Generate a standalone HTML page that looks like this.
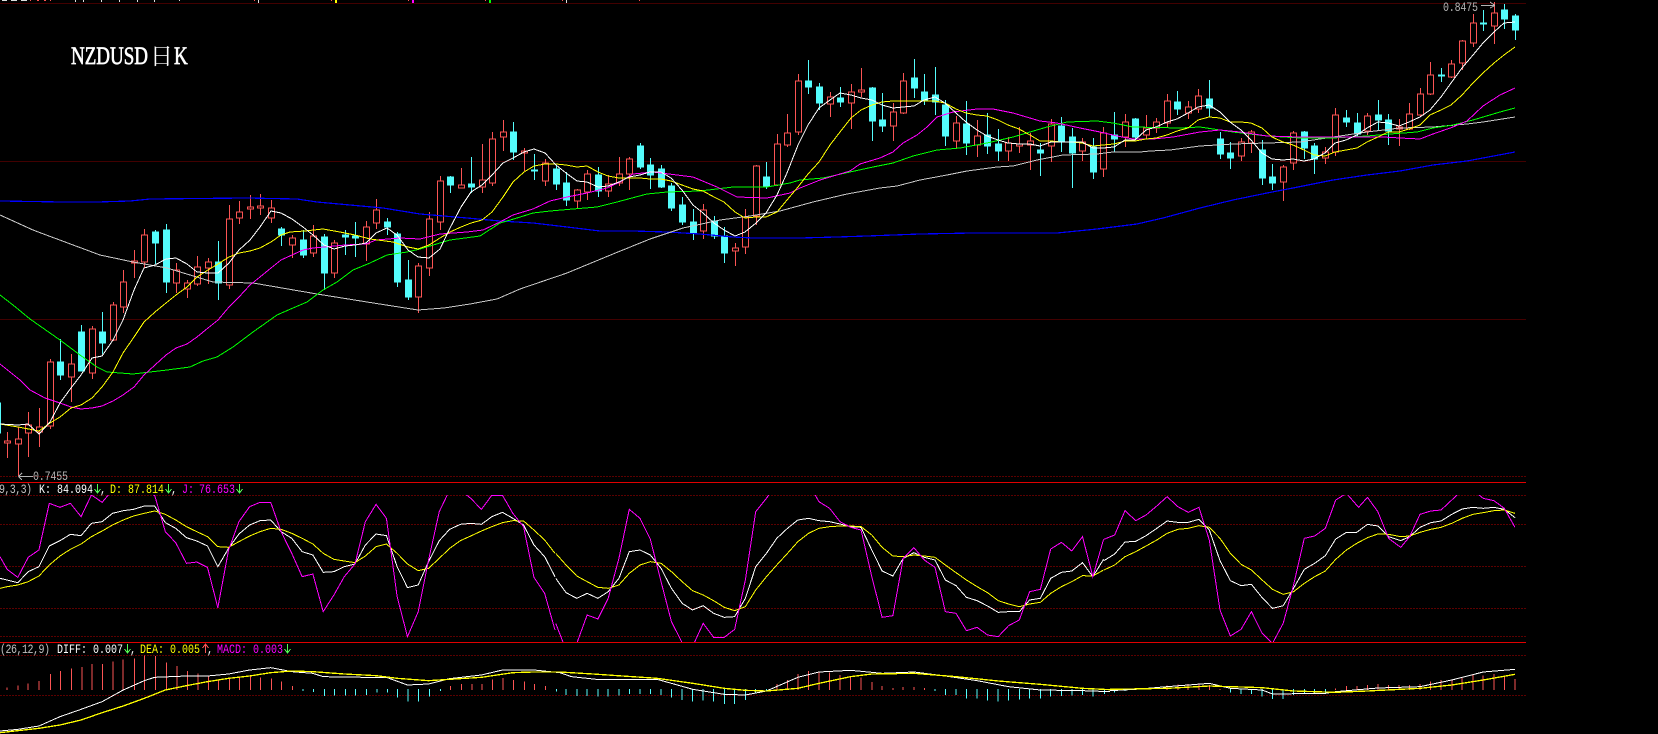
<!DOCTYPE html>
<html><head><meta charset="utf-8"><title>NZDUSD</title>
<style>
html,body{margin:0;padding:0;background:#000;width:1658px;height:734px;overflow:hidden}
svg{display:block;position:absolute;left:0;top:0}
text{font-family:"Liberation Mono","Noto Sans CJK SC",monospace;font-size:10px}
polyline,path.l{fill:none;vector-effect:non-scaling-stroke}
</style></head><body>
<svg width="1658" height="734" viewBox="0 0 1658 734" shape-rendering="crispEdges">
<defs><clipPath id="kc"><rect x="0" y="495" width="1526" height="147"/></clipPath></defs>
<rect width="1658" height="734" fill="#000"/>

<g stroke="#420000" stroke-width="1" fill="none">
<path d="M0 3.5H1526M0 161.5H1526M0 319.5H1526"/>
<path d="M0 476.5H1526M0 495.5H1526M0 524.5H1526M0 566.5H1526M0 608.5H1526M0 636.5H1526M0 655.5H1526M0 695.5H1526" stroke="#5c0000" stroke-dasharray="2 1"/>
</g>
<path d="M0 482.5H1526M0 642.5H1526" stroke="#e00000" stroke-width="1" fill="none"/>

<g fill="#ddd"><rect x="2" y="0" width="5" height="1"/><rect x="11" y="0" width="6" height="1"/><rect x="21" y="0" width="6" height="1"/><rect x="75" y="0" width="1" height="2"/><rect x="83" y="0" width="1" height="2"/><rect x="101" y="0" width="1" height="2"/><rect x="119" y="0" width="1" height="2"/><rect x="137" y="0" width="1" height="2"/><rect x="154" y="0" width="1" height="2"/><rect x="179" y="0" width="1" height="1"/><rect x="258" y="0" width="1" height="3"/><rect x="566" y="0" width="1" height="3"/></g>
<g fill="#fc5454"><rect x="30" y="0" width="1" height="1"/><rect x="37" y="0" width="2" height="1"/><rect x="44" y="0" width="2" height="1"/><rect x="50" y="0" width="1" height="1"/><rect x="254" y="0" width="1" height="1"/><rect x="331" y="0" width="1" height="1"/><rect x="408" y="0" width="1" height="1"/><rect x="485" y="0" width="1" height="1"/><rect x="562" y="0" width="1" height="1"/><rect x="639" y="0" width="1" height="1"/></g>
<rect x="335" y="0" width="2" height="3" fill="#ff0"/><rect x="412" y="0" width="2" height="3" fill="#f0f"/><rect x="489" y="0" width="2" height="3" fill="#0f0"/>

<g fill="#fff" stroke="#fff" stroke-width=".5" shape-rendering="auto">
<text transform="translate(71 64) scale(1 1.35)" style="font-family:'Liberation Serif',serif;font-size:19px" textLength="77" lengthAdjust="spacingAndGlyphs">NZDUSD</text>
<text x="150" y="64" style="font-family:'Liberation Serif','Noto Serif CJK SC',serif;font-size:23px" stroke-width="0">日</text>
<text transform="translate(174 64) scale(1 1.35)" style="font-family:'Liberation Serif',serif;font-size:19px">K</text>
</g>

<path fill="none" stroke="#fc5454" stroke-width="1" d="
M7.5 432V441M7.5 443V458M4.5 441h6v2h-6z
M18.5 427V439M18.5 444V476M15.5 439h6v5h-6z
M28.5 412V425M28.5 433V457M25.5 425h6v8h-6z
M39.5 408V427M39.5 432V447M36.5 427h6v5h-6z
M50.5 359V362M50.5 426V429M47.5 362h6v64h-6z
M71.5 354V364M71.5 377V402M68.5 364h6v13h-6z
M92.5 326V329M92.5 373V379M89.5 329h6v44h-6z
M113.5 302V305M113.5 340V341M110.5 305h6v35h-6z
M123.5 270V282M123.5 307V313M120.5 282h6v25h-6z
M134.5 250V261M134.5 263V278M131.5 261h6v2h-6z
M144.5 229V235M144.5 262V268M141.5 235h6v27h-6z
M176.5 263V270M176.5 283V293M173.5 270h6v13h-6z
M187.5 280V283M187.5 289V298M184.5 283h6v6h-6z
M197.5 256V267M197.5 284V286M194.5 267h6v17h-6z
M208.5 258V262M208.5 268V284M205.5 262h6v6h-6z
M229.5 205V219M229.5 285V289M226.5 219h6v66h-6z
M239.5 201V212M239.5 218V224M236.5 212h6v6h-6z
M250.5 195V207M250.5 209V219M247.5 207h6v2h-6z
M260.5 194V206M260.5 208V215M257.5 206h6v2h-6z
M271.5 200V208M271.5 218V223M268.5 208h6v10h-6z
M292.5 235V238M292.5 245V258M289.5 238h6v7h-6z
M313.5 225V236M313.5 253V257M310.5 236h6v17h-6z
M334.5 240V243M334.5 273V278M331.5 243h6v30h-6z
M366.5 221V227M366.5 244V261M363.5 227h6v17h-6z
M376.5 199V210M376.5 223V229M373.5 210h6v13h-6z
M418.5 263V266M418.5 297V313M415.5 266h6v31h-6z
M429.5 212V219M429.5 268V276M426.5 219h6v49h-6z
M440.5 176V181M440.5 222V230M437.5 181h6v41h-6z
M461.5 168V185M458.5 185h6v3h-6z
M482.5 144V180M482.5 187V193M479.5 180h6v7h-6z
M492.5 132V139M492.5 183V186M489.5 139h6v44h-6z
M503.5 120V132M503.5 137V151M500.5 132h6v5h-6z
M524.5 148V151M524.5 153V171M521.5 151h6v2h-6z
M545.5 159V163M545.5 181V186M542.5 163h6v18h-6z
M577.5 189V190M577.5 201V209M574.5 190h6v11h-6z
M587.5 170V174M587.5 192V200M584.5 174h6v18h-6z
M608.5 175V184M608.5 191V197M605.5 184h6v7h-6z
M619.5 157V174M619.5 183V186M616.5 174h6v9h-6z
M629.5 157V159M629.5 174V190M626.5 159h6v15h-6z
M703.5 204V210M703.5 231V239M700.5 210h6v21h-6z
M735.5 243V248M735.5 251V266M732.5 248h6v3h-6z
M745.5 209V217M745.5 247V254M742.5 217h6v30h-6z
M756.5 165V166M756.5 216V225M753.5 166h6v50h-6z
M777.5 134V144M777.5 185V186M774.5 144h6v41h-6z
M787.5 114V133M787.5 145V147M784.5 133h6v12h-6z
M798.5 74V81M798.5 132V135M795.5 81h6v51h-6z
M830.5 92V97M830.5 104V117M827.5 97h6v7h-6z
M851.5 84V92M851.5 103V129M848.5 92h6v11h-6z
M861.5 68V90M861.5 92V97M858.5 90h6v2h-6z
M893.5 103V112M893.5 126V141M890.5 112h6v14h-6z
M903.5 73V81M903.5 113V114M900.5 81h6v32h-6z
M956.5 116V123M956.5 141V148M953.5 123h6v18h-6z
M977.5 120V136M977.5 145V157M974.5 136h6v9h-6z
M1008.5 137V143M1008.5 151V161M1005.5 143h6v8h-6z
M1019.5 127V144M1019.5 146V153M1016.5 144h6v2h-6z
M1030.5 133V141M1030.5 145V170M1027.5 141h6v4h-6z
M1051.5 119V124M1051.5 146V162M1048.5 124h6v22h-6z
M1082.5 138V142M1082.5 151V161M1079.5 142h6v9h-6z
M1103.5 127V133M1103.5 169V177M1100.5 133h6v36h-6z
M1125.5 114V122M1125.5 137V147M1122.5 122h6v15h-6z
M1146.5 115V128M1146.5 135V139M1143.5 128h6v7h-6z
M1156.5 118V122M1156.5 128V133M1153.5 122h6v6h-6z
M1167.5 94V101M1167.5 123V128M1164.5 101h6v22h-6z
M1188.5 101V107M1188.5 113V119M1185.5 107h6v6h-6z
M1198.5 89V96M1198.5 109V113M1195.5 96h6v13h-6z
M1241.5 138V142M1241.5 156V161M1238.5 142h6v14h-6z
M1251.5 130V132M1251.5 143V153M1248.5 132h6v11h-6z
M1283.5 165V167M1283.5 182V201M1280.5 167h6v15h-6z
M1293.5 131V133M1293.5 163V170M1290.5 133h6v30h-6z
M1325.5 147V152M1325.5 158V164M1322.5 152h6v6h-6z
M1335.5 108V115M1335.5 152V156M1332.5 115h6v37h-6z
M1367.5 113V116M1367.5 131V135M1364.5 116h6v15h-6z
M1399.5 119V127M1399.5 129V146M1396.5 127h6v2h-6z
M1409.5 103V114M1409.5 129V130M1406.5 114h6v15h-6z
M1420.5 88V94M1420.5 115V117M1417.5 94h6v21h-6z
M1430.5 62V75M1430.5 94V95M1427.5 75h6v19h-6z
M1451.5 60V64M1451.5 77V78M1448.5 64h6v13h-6z
M1462.5 40V41M1462.5 63V70M1459.5 41h6v22h-6z
M1473.5 14V23M1473.5 43V47M1470.5 23h6v20h-6z
M1494.5 2V13M1494.5 26V44M1491.5 13h6v13h-6z"/>

<path fill="#54fcfc" stroke="#54fcfc" stroke-width="1" d="
M-3 403h3.5v30h-3.5z
M60.5 339V380M57.5 362h6v13h-6z
M81.5 325V371M78.5 332h6v39h-6z
M102.5 312V354M99.5 332h6v11h-6z
M155.5 230V264M152.5 232h6v11h-6z
M166.5 224V293M163.5 230h6v52h-6z
M218.5 241V300M215.5 262h6v21h-6z
M281.5 227V246M278.5 229h6v6h-6z
M303.5 230V258M300.5 240h6v15h-6z
M324.5 234V290M321.5 237h6v36h-6z
M345.5 230V255M342.5 235h6v2h-6z
M355.5 222V257M352.5 236h6v2h-6z
M387.5 218V235M384.5 222h6v5h-6z
M397.5 232V287M394.5 234h6v48h-6z
M408.5 260V300M405.5 280h6v17h-6z
M450.5 176V193M447.5 177h6v8h-6z
M471.5 157V193M468.5 184h6v3h-6z
M513.5 122V160M510.5 132h6v20h-6z
M534.5 154V180M531.5 170h6v1h-6z
M556.5 165V190M553.5 169h6v15h-6z
M566.5 172V206M563.5 183h6v17h-6z
M598.5 167V197M595.5 175h6v16h-6z
M640.5 143V169M637.5 146h6v21h-6z
M650.5 158V189M647.5 165h6v10h-6z
M661.5 165V188M658.5 169h6v18h-6z
M671.5 183V211M668.5 186h6v22h-6z
M682.5 197V225M679.5 205h6v17h-6z
M693.5 209V240M690.5 222h6v11h-6z
M714.5 216V239M711.5 221h6v15h-6z
M724.5 227V263M721.5 236h6v17h-6z
M766.5 162V189M763.5 177h6v9h-6z
M808.5 60V94M805.5 81h6v6h-6z
M819.5 83V110M816.5 87h6v16h-6z
M840.5 87V107M837.5 98h6v4h-6z
M872.5 87V141M869.5 88h6v33h-6z
M882.5 93V132M879.5 120h6v6h-6z
M914.5 59V98M911.5 78h6v10h-6z
M924.5 74V105M921.5 92h6v9h-6z
M935.5 67V115M932.5 95h6v7h-6z
M945.5 100V146M942.5 105h6v31h-6z
M966.5 101V155M963.5 124h6v19h-6z
M987.5 113V154M984.5 135h6v11h-6z
M998.5 129V161M995.5 144h6v7h-6z
M1040.5 143V176M1037.5 150h6v3h-6z
M1061.5 117V152M1058.5 126h6v15h-6z
M1072.5 128V188M1069.5 137h6v16h-6z
M1093.5 138V179M1090.5 147h6v25h-6z
M1114.5 112V152M1111.5 135h6v4h-6z
M1135.5 118V140M1132.5 119h6v18h-6z
M1177.5 91V115M1174.5 102h6v7h-6z
M1209.5 80V117M1206.5 99h6v9h-6z
M1220.5 132V159M1217.5 139h6v15h-6z
M1230.5 142V169M1227.5 153h6v5h-6z
M1262.5 140V185M1259.5 150h6v28h-6z
M1272.5 164V190M1269.5 177h6v6h-6z
M1304.5 131V159M1301.5 132h6v16h-6z
M1314.5 143V174M1311.5 146h6v13h-6z
M1346.5 110V127M1343.5 118h6v4h-6z
M1357.5 113V137M1354.5 123h6v11h-6z
M1378.5 100V130M1375.5 115h6v5h-6z
M1388.5 114V145M1385.5 120h6v11h-6z
M1441.5 68V82M1438.5 75h6v1h-6z
M1483.5 10V31M1480.5 23h6v1h-6z
M1504.5 4V29M1501.5 10h6v9h-6z
M1515.5 14V40M1512.5 16h6v14h-6z"/>

<g fill="none" stroke-width="1">
<polyline stroke="#0000ff" stroke-width="1.2" points="0,201 63,202 97,202 130,201 150,199 247,198 297,199 317,202 350,205 383,208 420,214 467,218 500,221 533,223 567,227 600,231 633,231 667,232 700,234 733,237 753,238 800,238 837,237 867,236 920,234 973,233 1057,233 1077,231 1097,229 1113,227 1137,224 1163,218 1200,208 1233,200 1267,193 1293,188 1333,180 1367,175 1400,171 1433,165 1467,161 1515,152"/>
<polyline stroke="#c8c8c8" points="0,215 33,230 57,239 100,255 133,262 167,268 213,282 253,283 317,294 367,302 418,310 444,308 470,304 497,299 520,289 567,273 613,254 650,239 683,228 720,220 750,216 780,211 813,202 847,194 880,188 897,186 920,180 947,175 967,171 997,167 1013,166 1037,160 1063,155 1097,154 1113,152 1140,152 1150,151 1170,150 1200,146 1233,144 1267,143 1300,142 1333,137 1367,132 1400,128 1433,127 1467,124 1483,122 1515,117"/>
<polyline stroke="#00ff00" points="0,295 13,305 30,319 60,340 80,355 97,367 107,372 133,374 150,372 167,370 190,367 203,361 217,357 233,347 253,332 277,315 293,308 307,302 323,290 337,282 353,270 370,263 387,255 407,252 420,249 450,240 480,236 500,223 517,218 533,213 550,211 573,209 597,207 617,202 647,194 667,192 700,191 733,187 767,187 790,183 800,180 823,178 850,172 873,167 893,163 913,156 937,150 960,148 987,143 1013,137 1047,127 1067,122 1097,121 1113,123 1133,127 1180,128 1200,127 1233,132 1267,136 1300,138 1333,138 1367,136 1390,134 1417,132 1433,128 1453,125 1473,120 1500,112 1515,108"/>
<polyline stroke="#ff00ff" points="0,364 10,372 20,380 30,390 45,398 60,403 71,407 81,409 92,408 102,406 113,401 123,395 134,387 144,375 155,365 166,355 176,348 187,344 197,337 208,328 218,320 229,307 239,297 250,285 260,277 271,268 281,260 292,255 303,250 313,248 324,247 345,245 366,244 376,240 400,238 420,239 440,234 467,232 483,230 500,222 513,215 533,209 550,201 567,197 587,193 607,188 620,182 633,174 653,172 677,175 693,177 717,187 737,197 767,198 790,193 800,188 820,180 850,171 860,164 880,158 893,152 903,143 917,135 927,127 937,117 953,112 977,109 993,109 1013,113 1040,121 1057,123 1080,128 1100,132 1117,136 1133,139 1153,139 1173,137 1200,132 1220,130 1240,132 1267,136 1300,137 1333,137 1383,137 1400,138 1420,139 1433,134 1453,127 1467,121 1483,106 1500,95 1515,88"/>
<polyline stroke="#ffff00" points="0,424 18,427 39,431 50,423 60,417 71,408 81,405 92,398 102,387 113,372 123,353 134,337 144,322 155,312 166,303 176,295 187,287 197,277 208,270 218,264 229,257 239,253 250,251 260,248 271,242 281,235 290,232 305,231 323,229 340,232 355,235 370,239 393,242 408,247 418,249 429,245 440,238 450,232 461,227 471,223 482,220 492,212 503,197 513,182 524,172 534,166 545,164 556,164 566,165 577,167 587,166 598,172 608,176 619,178 629,178 640,178 650,179 661,179 671,181 682,185 693,189 703,191 714,197 724,202 735,212 745,218 756,217 766,217 777,212 787,200 798,187 808,174 819,162 830,145 840,132 851,118 861,110 872,105 882,102 893,101 903,101 914,101 924,101 935,101 945,103 956,109 966,113 977,115 987,116 998,120 1008,125 1019,129 1030,135 1040,141 1051,141 1061,142 1072,142 1082,143 1093,146 1103,145 1114,144 1125,141 1135,141 1146,139 1156,138 1167,135 1177,131 1188,128 1198,120 1209,117 1220,118 1230,122 1241,122 1251,123 1262,128 1272,137 1283,142 1293,145 1304,150 1314,155 1325,156 1335,152 1346,150 1357,148 1367,142 1378,137 1388,132 1399,132 1409,129 1420,125 1430,115 1441,110 1451,105 1462,95 1473,83 1483,73 1494,63 1504,55 1515,47"/>
<polyline stroke="#ffffff" points="0,424 18,425 28,424 39,434 50,422 60,403 71,388 81,375 92,358 102,356 113,340 123,320 134,290 144,268 155,265 166,259 176,258 187,264 197,272 208,273 218,273 229,263 239,250 250,240 260,227 271,211 281,213 292,219 303,227 313,235 324,245 334,249 345,246 355,245 366,243 376,233 387,228 397,235 408,250 418,257 429,258 440,249 450,228 461,207 471,192 482,185 492,175 503,163 513,158 524,152 534,149 545,153 556,165 566,173 577,181 587,182 598,187 608,186 619,182 629,177 640,175 650,172 661,172 671,178 682,190 693,205 703,213 714,223 724,230 735,236 745,232 756,223 766,213 777,195 787,173 798,145 808,125 819,108 830,100 840,93 851,95 861,98 872,100 882,105 893,108 903,107 914,106 924,100 935,97 945,103 956,113 966,122 977,130 987,136 998,140 1008,143 1019,144 1030,144 1040,146 1051,142 1061,142 1072,142 1082,142 1093,148 1103,148 1114,147 1125,140 1135,140 1146,130 1156,127 1167,122 1177,119 1188,113 1198,107 1209,105 1220,112 1230,122 1241,130 1251,140 1262,153 1272,159 1283,160 1293,159 1304,161 1314,159 1325,153 1335,143 1346,140 1357,135 1367,128 1378,122 1388,123 1399,126 1409,122 1420,117 1430,110 1441,97 1451,83 1462,68 1473,55 1483,43 1494,32 1504,23 1515,22"/>
</g>

<g fill="#b4b4b4" shape-rendering="auto">
<text transform="translate(33 480) scale(1 1.25)" textLength="35">0.7455</text>
<text transform="translate(1443 11) scale(1 1.25)" textLength="35">0.8475</text>
</g>
<path d="M18.5 476.5H33M18.5 476.5L22 473M18.5 476.5L22 480M1481 5.5H1495M1495 5.5L1490 2M1495 5.5L1490 8" stroke="#b4b4b4" fill="none"/>

<g clip-path="url(#kc)" fill="none" stroke-width="1">
<g transform="translate(0 470) scale(.35714 .33333)">
<polyline stroke="#fff" points="0,325 20,330 50,338 79,305 109,290 138,228 168,212 197,193 227,197 256,160 286,155 315,130 345,122 374,118 404,108 433,108 463,158 492,175 522,203 551,213 581,228 610,290 640,235 669,192 699,165 728,152 758,150 787,185 817,205 846,245 876,255 905,307 935,305 964,290 994,282 1023,225 1053,192 1082,197 1112,290 1141,353 1171,345 1200,275 1230,212 1259,178 1289,163 1318,160 1348,163 1377,140 1407,127 1436,145 1466,165 1495,225 1525,260 1554,320"/>
<polyline stroke="#ff0" points="0,355 20,350 50,345 79,335 109,318 138,285 168,258 197,238 227,222 256,200 286,183 315,165 345,150 374,138 404,130 433,123 463,133 492,150 522,170 551,185 581,200 610,230 640,232 669,215 699,198 728,185 758,175 787,178 817,190 846,205 876,222 905,250 935,268 964,273 994,278 1023,258 1053,230 1082,222 1112,250 1141,282 1171,302 1200,295 1230,265 1259,235 1289,212 1318,198 1348,183 1377,170 1407,158 1436,152 1466,153 1495,180 1525,210 1554,250"/>
<polyline stroke="#f0f" points="0,260 20,298 50,322 79,262 109,240 138,100 168,112 197,100 227,140 256,75 286,97 315,60 345,40 433,76 463,185 492,218 522,280 551,276 581,292 610,413 640,240 669,155 699,110 728,97 758,97 787,185 817,250 846,320 876,312 905,425 935,375 964,320 994,282 1023,155 1053,103 1082,145 1112,380 1141,500 1171,425 1200,270 1230,125 1259,60 1289,60 1318,85 1348,118 1377,76 1407,76 1436,130 1466,170 1495,322 1525,370 1554,480"/>
</g>
<g transform="translate(550 470) scale(.35714 .33333)">
<polyline stroke="#fff" points="16,325 45,368 75,385 104,370 134,385 163,365 193,325 222,245 252,240 281,255 311,295 340,355 370,400 399,420 429,407 458,430 488,442 517,440 547,385 576,290 606,250 635,205 665,175 694,150 724,145 753,152 783,155 812,162 842,170 871,172 901,240 930,303 960,318 989,265 1019,248 1048,262 1078,270 1107,330 1137,347 1166,382 1196,392 1225,408 1255,427 1284,425 1314,425 1343,390 1373,385 1402,325 1432,307 1461,303 1491,278 1520,320 1550,268"/>
<polyline stroke="#ff0" points="16,250 45,285 75,318 104,335 134,352 163,355 193,345 222,310 252,285 281,275 311,280 340,305 370,335 399,362 429,375 458,392 488,412 517,422 547,410 576,360 606,320 635,285 665,250 694,215 724,190 753,175 783,170 812,168 842,168 871,170 901,195 930,232 960,258 989,260 1019,255 1048,258 1078,262 1107,285 1137,308 1166,330 1196,350 1225,368 1255,392 1284,402 1314,410 1343,402 1373,397 1402,370 1432,350 1461,335 1491,317 1520,318 1550,300"/>
<polyline stroke="#f0f" points="16,460 45,540 75,520 104,435 134,447 163,385 193,265 222,118 252,145 281,208 311,335 340,455 370,518 399,530 429,460 458,502 488,502 517,478 547,330 576,125 606,85 635,40 665,20 694,20 724,40 753,95 783,115 812,155 842,172 871,180 901,320 930,442 960,437 989,265 1019,233 1048,270 1078,292 1107,425 1137,430 1166,482 1196,472 1225,495 1255,500 1284,467 1314,450 1343,365 1373,358 1402,237 1432,217 1461,243 1491,200 1520,320 1550,208"/>
</g>
<g transform="translate(1100 470) scale(.35714 .33333)">
<polyline stroke="#fff" points="11,272 41,252 70,216 100,214 129,197 159,175 188,153 218,157 247,157 277,148 306,180 336,272 365,332 395,347 424,343 454,383 483,415 513,407 542,355 572,298 601,280 631,257 660,207 690,187 719,187 749,163 778,168 808,200 842,212 867,200 896,172 926,158 955,153 985,133 1014,117 1044,112 1073,115 1103,112 1132,118 1162,143"/>
<polyline stroke="#ff0" points="11,300 41,285 70,260 100,245 129,228 159,210 188,190 218,178 247,175 277,167 306,172 336,205 365,250 395,283 424,300 454,330 483,358 513,373 542,365 572,340 601,320 631,303 660,268 690,240 719,220 749,203 778,192 808,193 842,200 867,198 896,187 926,178 955,172 985,160 1014,145 1044,133 1073,128 1103,122 1132,120 1162,130"/>
<polyline stroke="#f0f" points="11,208 41,195 70,122 100,152 129,135 159,108 188,80 218,110 247,127 277,112 306,210 336,420 365,498 395,478 424,425 454,490 483,520 513,460 542,345 572,205 601,198 631,175 660,90 690,70 724,112 749,82 778,125 808,205 842,232 867,200 896,133 926,123 955,120 985,90 1014,60 1044,60 1073,85 1103,92 1132,115 1162,172"/>
</g>
</g>

<g fill="none" stroke-width="1">
<g transform="translate(0 470) scale(.35714 .33333)">
<path class="l" stroke="#fc5454" d="M20 652V660M50 646V660M79 640V660M109 633V660M141 612V660M170 603V660M200 595V660M229 591V660M258 582V660M287 582V660M317 575V660M345 568V660M376 565V660M404 557V660M436 558V660M466 577V660M495 588V660M525 603V660M554 610V660M584 617V660M612 630V660M642 622V660M671 620V660M701 618V660M730 622V660M760 625V660M788 635V660M819 648V660M1262 648V660M1292 642V660M1321 642V660M1350 642V660M1379 628V660M1409 624V660M1438 630V660M1468 634V660M1497 642V660M1527 648V660"/>
<path class="l" stroke="#54fcfc" d="M849 657V663M878 657V666M908 657V678M937 657V677M967 657V677M996 657V677M1026 657V675M1055 657V668M1085 657V668M1113 657V683M1143 657V695M1172 657V695M1202 657V680M1233 657V663M1558 657V664"/>
<polyline stroke="#fff" points="0,783 50,778 109,768 168,740 227,718 286,695 345,660 404,632 433,622 522,618 581,618 640,612 699,600 758,593 817,605 876,610 905,620 1023,622 1082,622 1141,645 1200,642 1259,626 1348,615 1407,600 1495,600 1568,608"/>
<polyline stroke="#ff0" stroke-width="1.3" points="0,788 50,782 109,775 168,765 227,750 286,728 345,708 404,685 463,660 522,647 581,635 640,625 699,618 758,608 817,603 876,605 964,612 1053,617 1112,625 1200,632 1259,628 1348,622 1436,608 1495,606 1568,606"/>
</g>
<g transform="translate(550 470) scale(.35714 .33333)">
<path class="l" stroke="#54fcfc" d="M45 657V675M75 657V678M104 657V678M134 657V680M163 657V680M193 657V677M222 657V672M252 657V672M281 657V672M311 657V675M340 657V683M370 657V690M399 657V695M429 657V692M458 657V695M488 657V702M517 657V702M547 657V690M576 657V668M606 657V665M1078 657V663M1107 657V675M1137 657V675M1166 657V686M1196 657V686M1225 657V692M1255 657V695M1284 657V692M1314 657V689M1343 657V686M1373 657V686M1402 657V680M1432 657V678M1461 657V677M1491 657V675M1520 657V680M1552 657V672"/>
<path class="l" stroke="#fc5454" d="M635 642V660M665 630V660M694 612V660M724 603V660M753 606V660M783 608V660M812 615V660M842 618V660M871 623V660M901 636V660M930 648V660M960 654V660M989 651V660M1019 651V660M1048 654V660"/>
<polyline stroke="#fff" points="28,608 60,620 130,628 300,628 400,658 488,673 547,675 606,663 694,622 753,606 842,601 930,610 1019,606 1107,618 1196,632 1284,650 1373,660 1491,662 1568,665"/>
<polyline stroke="#ff0" stroke-width="1.3" points="28,606 120,612 300,625 400,640 488,655 547,661 606,663 694,655 753,640 842,620 901,612 1019,610 1137,620 1255,633 1373,643 1491,655 1568,659"/>
</g>
<g transform="translate(1100 470) scale(.35714 .33333)">
<path class="l" stroke="#54fcfc" d="M41 657V667M70 657V663M365 657V668M395 657V672M424 657V672M454 657V680M483 657V687M513 657V687M542 657V675M572 657V672M601 657V672M631 657V672"/>
<path class="l" stroke="#fc5454" d="M188 646V660M218 644V660M247 642V660M277 642V660M306 645V660M336 657V660M660 655V660M690 648V660M719 648V660M749 645V660M778 642V660M808 645V660M837 645V660M867 645V660M896 642V660M926 635V660M955 630V660M985 628V660M1014 622V660M1044 614V660M1073 616V660M1103 612V660M1132 617V660M1162 627V660"/>
<polyline stroke="#fff" points="28,662 100,658 188,650 306,640 365,655 454,660 483,672 631,670 660,665 778,654 896,650 985,630 1073,606 1162,598"/>
<polyline stroke="#ff0" stroke-width="1.3" points="28,658 188,655 306,648 454,653 542,663 660,667 749,663 896,655 985,645 1073,630 1162,613"/>
</g>
</g>

<g shape-rendering="auto">
<g transform="translate(0 493) scale(1 1.25)">
<text x="-1" y="0" fill="#c0c0c0" textLength="33">9,3,3)</text>
<text x="39" y="0" fill="#fff">K:</text><text x="57" y="0" fill="#fff">84.094</text><text x="100" y="0" fill="#fff">,</text>
<text x="110" y="0" fill="#ff0">D:</text><text x="128" y="0" fill="#ff0">87.814</text><text x="171" y="0" fill="#fff">,</text>
<text x="182" y="0" fill="#f0f">J:</text><text x="199" y="0" fill="#f0f">76.653</text>
</g>
<g transform="translate(0 653) scale(1 1.25)">
<text x="0" y="0" fill="#c0c0c0" textLength="50">(26,12,9)</text>
<text x="57" y="0" fill="#fff">DIFF:</text><text x="93" y="0" fill="#fff">0.007</text><text x="130" y="0" fill="#fff">,</text>
<text x="140" y="0" fill="#ff0">DEA:</text><text x="170" y="0" fill="#ff0">0.005</text><text x="207" y="0" fill="#fff">,</text>
<text x="217" y="0" fill="#f0f">MACD:</text><text x="253" y="0" fill="#f0f">0.003</text>
</g>
</g>
<g fill="none" stroke-width="1">
<path stroke="#54fc54" d="M97.5 484V493M94.5 489L97.5 493L100.5 489M168.5 484V493M165.5 489L168.5 493L171.5 489M239.5 484V493M236.5 489L239.5 493L242.5 489M127.5 644V653M124.5 649L127.5 653L130.5 649M287.5 644V653M284.5 649L287.5 653L290.5 649"/>
<path stroke="#fc5454" d="M205.5 644V653M202.5 648L205.5 644L208.5 648"/>
</g>
</svg>
</body></html>
